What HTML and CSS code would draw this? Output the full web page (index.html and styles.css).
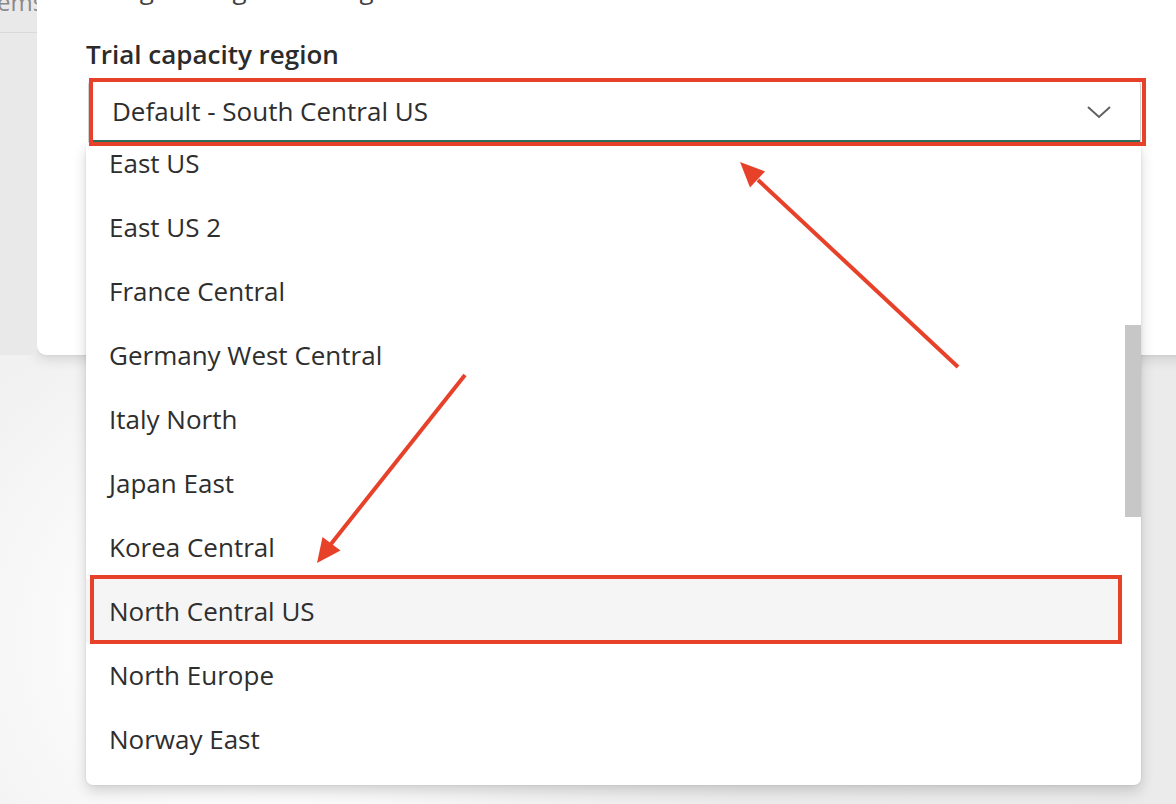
FILE: index.html
```html
<!DOCTYPE html>
<html lang="en">
<head>
<meta charset="utf-8">
<title>Trial capacity region</title>
<link rel="stylesheet" href="styles.css">
</head>
<body>
<div class="app">
  <aside class="side">
    <div class="side-text">ems</div>
    <div class="side-rule"></div>
  </aside>
  <section class="dialog">
    <p class="cut-text">Using the region setting</p>
    <label class="field-label">Trial capacity region</label>
    <div class="field">
      <span class="field-value">Default - South Central US</span>
      <svg class="chev" width="26" height="16" viewBox="0 0 26 16"><polyline points="2,3 13,13 24,3" fill="none" stroke="#616161" stroke-width="2"/></svg>
    </div>
  </section>
</div>

<div class="listbox">
  <ul class="options">
    <li class="opt">East US</li>
    <li class="opt">East US 2</li>
    <li class="opt">France Central</li>
    <li class="opt">Germany West Central</li>
    <li class="opt">Italy North</li>
    <li class="opt">Japan East</li>
    <li class="opt">Korea Central</li>
    <li class="opt opt-hover">North Central US</li>
    <li class="opt">North Europe</li>
    <li class="opt">Norway East</li>
  </ul>
  <div class="thumb"></div>
</div>

<div class="mark mark-field"></div>
<div class="mark mark-item"></div>

<svg class="arrows" width="1176" height="804" viewBox="0 0 1176 804">
  <line x1="958" y1="367" x2="758" y2="180" stroke="#e8412a" stroke-width="4"/>
  <polygon points="740,162 765,171.5 750,187.5" fill="#e8412a"/>
  <line x1="465" y1="375" x2="331" y2="544" stroke="#e8412a" stroke-width="4"/>
  <polygon points="317,563 340.5,550.5 322.5,537" fill="#e8412a"/>
</svg>
</body>
</html>
```

FILE: styles.css
```css
* { box-sizing: border-box; }
html, body { margin: 0; padding: 0; }
body {
  width: 1176px;
  height: 804px;
  overflow: hidden;
  position: relative;
  font-family: "Open Sans", "Noto Sans", sans-serif;
  color: #2b2b2b;
  background:
    radial-gradient(circle at 240px 640px, #ffffff 0, #fbfbfb 160px, #f2f2f2 330px, #ececec 520px, #ebebeb 900px);
}
.app {
  display: flex;
  align-items: flex-start;
  width: 1176px;
}
.side {
  width: 37px;
  flex: none;
  height: 355px;
  background: #e9e9e9;
  overflow: hidden;
  position: relative;
}
.side-text {
  font-size: 24px;
  line-height: 24px;
  color: #8a8a8a;
  margin-top: -10px;
  margin-left: -3px;
}
.side-rule {
  margin-top: 18px;
  height: 1px;
  background: #d9d9d9;
}
.dialog {
  flex: none;
  width: 1160px;
  height: 355px;
  background: #fff;
  border-bottom-left-radius: 9px;
  box-shadow: 0 4px 14px rgba(0,0,0,0.13), 0 0 3px rgba(0,0,0,0.08);
  padding-left: 49px;
  overflow: hidden;
}
.cut-text {
  margin: -27px 0 0 0;
  font-size: 26px;
  line-height: 32px;
  color: #424242;
  height: 32px;
}
.field-label {
  display: block;
  margin-top: 33px;
  font-size: 26px;
  font-weight: 600;
  line-height: 32px;
  color: #2b2b2b;
}
.field {
  margin-top: 10px;
  margin-left: 2px;
  width: 1053px;
  height: 63px;
  border: 1px solid #d1d1d1;
  border-bottom: 3px solid #2f6e5c;
  border-radius: 5px 5px 3px 3px;
  display: flex;
  align-items: center;
  justify-content: space-between;
  padding: 0 28px 0 23px;
}
.field-value {
  font-size: 26px;
  color: #2e2e2e;
}
.chev { display: block; margin-top: 2px; }
.listbox {
  position: absolute;
  left: 86px;
  top: 145px;
  width: 1055px;
  height: 640px;
  background: #fff;
  border-radius: 0 0 7px 7px;
  box-shadow: 0 6px 14px rgba(0,0,0,0.16), 0 0 3px rgba(0,0,0,0.1);
  overflow: hidden;
}
.options {
  list-style: none;
  margin: -14px 0 0 0;
  padding: 0;
}
.opt {
  height: 64px;
  display: flex;
  align-items: center;
  padding-left: 23px;
  font-size: 26px;
  color: #2e2e2e;
  margin-right: 20px;
}
.opt-hover { background: #f5f5f5; }
.thumb {
  position: absolute;
  right: 0;
  top: 180px;
  width: 16px;
  height: 192px;
  background: #c7c7c7;
}
.mark {
  position: absolute;
  border: 4px solid #e8412a;
}
.mark-field { left: 89px; top: 78px; width: 1057px; height: 68px; }
.mark-item { left: 90px; top: 575px; width: 1032px; height: 69px; }
.arrows { position: absolute; left: 0; top: 0; }
```
